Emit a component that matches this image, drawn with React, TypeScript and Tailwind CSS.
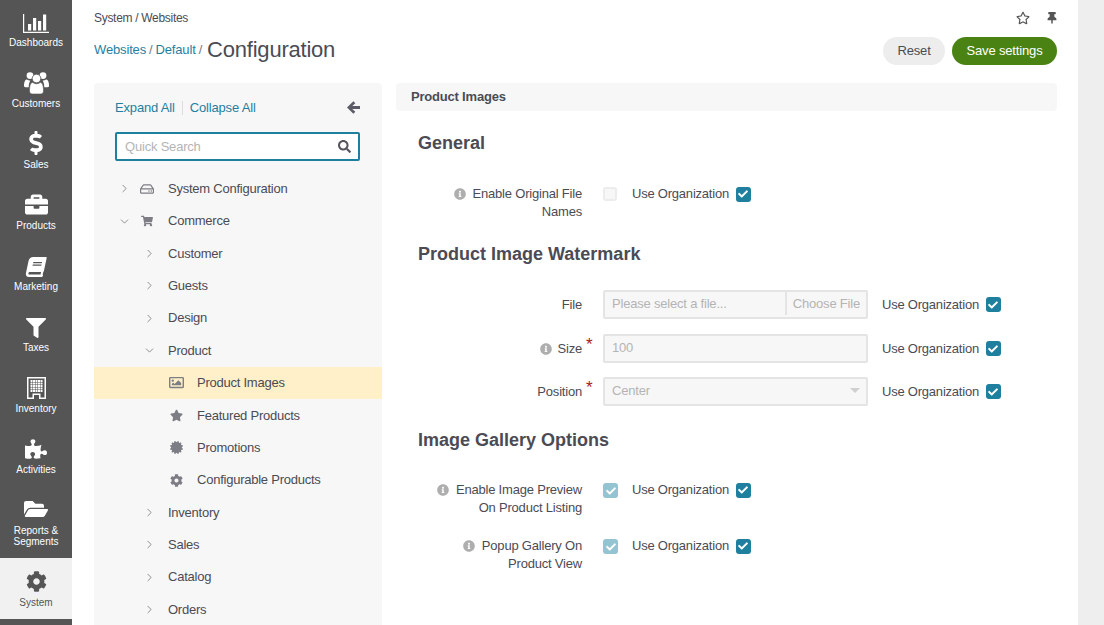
import React from "react";
import { FaDollarSign, FaBriefcase, FaBook, FaFilter, FaPuzzlePiece, FaFolderOpen, FaCog, FaSearch, FaShoppingCart, FaRegHdd, FaRegImage, FaStar, FaCertificate, FaInfoCircle, FaRegStar, FaThumbtack, FaCheck } from "react-icons/fa";
import { ChevronRight, ChevronDown } from "lucide-react";

const Bars = () => (
  <svg width="26" height="19" viewBox="0 0 26 19" fill="white">
    <path d="M0 0h1.2v17.8H26V19H0z" />
    <rect x="5" y="10" width="3.2" height="6.5" />
    <rect x="10" y="4" width="3.2" height="12.5" />
    <rect x="15" y="7" width="3.2" height="9.5" />
    <rect x="20" y="0.5" width="3.2" height="16" />
  </svg>
);

const Users = () => (
  <svg width="25" height="22" viewBox="0 0 25 22" fill="white">
    <circle cx="6" cy="3.6" r="3.4" />
    <circle cx="19" cy="3.6" r="3.4" />
    <path d="M0 14c0-4 1-6.5 3-6.5 1 .8 2 1.1 3.4 1.1-.8 1.2-1.6 3-1.7 6.6H1.5C.5 15.200 0 14.800 0 14z" />
    <path d="M25 14c0-4-1-6.5-3-6.500-1 .8-2 1.100-3.400 1.100.8 1.200 1.600 3 1.700 6.600h3.200c1 0 1.500-.4 1.500-1.200z" />
    <circle cx="12.500" cy="6.500" r="4.300" fill="white" stroke="#555555" strokeWidth="0.8" />
    <path d="M5.500 19c0-6 1.200-8.500 3.400-8.500 1 .9 2.200 1.300 3.600 1.300s2.600-.4 3.600-1.300c2.200 0 3.400 2.500 3.400 8.500 0 2-1.300 3-3 3H8.500c-1.700 0-3-1-3-3z" stroke="#555555" strokeWidth="0.6" />
  </svg>
);

const Building = () => (
  <svg width="19" height="22" viewBox="0 0 19 22" fill="white">
    <path fillRule="evenodd" d="M0 0h19v22H12v-4H7v4H0zM1.500 1.500v19H5.500v-4h8v4h4v-19z" />
    {[3, 5.500, 8, 10.500, 13].map((y) => [3.500, 6, 8.500, 11, 13.500].map((x) => <rect key={`${x}-${y}`} x={x} y={y} width="2" height="2" />))}
  </svg>
);

const BackArrow = () => (
  <svg width="13" height="13" viewBox="0 0 13 13" fill="#5c5c66">
    <path d="M6.400 0.300L8.300 2.200 5.300 5H13V8H5.300L8.300 10.800 6.400 12.700 0 6.500z" />
  </svg>
);

const nav: [React.ReactNode, string][] = [
  [<Bars />, "Dashboards"],
  [<Users />, "Customers"],
  [<FaDollarSign size={24} />, "Sales"],
  [<FaBriefcase size={23} />, "Products"],
  [<FaBook size={20} className="-skew-x-12" />, "Marketing"],
  [<FaFilter size={20} />, "Taxes"],
  [<Building />, "Inventory"],
  [<FaPuzzlePiece size={22} />, "Activities"],
];

function NavItem({ icon, label, tall }: { icon: React.ReactNode; label: string; tall?: boolean }) {
  return (
    <div className={`${tall ? "h-[70px]" : "h-[61px]"} flex flex-col items-center text-white shrink-0`}>
      <div className="h-[24px] mt-[9px] flex items-end justify-center">{icon}</div>
      <div className={`mt-[4px] text-[10px] text-center w-[64px] ${tall ? "leading-[11px]" : "leading-[12px]"}`}>{label}</div>
    </div>
  );
}

function Tree({ depth, open, icon, label, active }: { depth: number; open?: boolean; icon?: React.ReactNode; label: string; active?: boolean }) {
  return (
    <div className={`h-[32.38px] flex items-center ${active ? "bg-[#fff0c9]" : ""}`}>
      {depth < 2 ? (
        <span className={`w-[16px] flex justify-center text-[#777777] ${depth === 0 ? "ml-[22px]" : "ml-[47px]"}`}>
          {open ? <ChevronDown size={13} strokeWidth={1.5} /> : <ChevronRight size={13} strokeWidth={1.5} />}
        </span>
      ) : (
        <span className="w-[16px] ml-[74px] flex justify-center text-[#7d7d85]">{icon}</span>
      )}
      {depth === 0 && <span className="w-[16px] ml-[7px] flex justify-center text-[#7d7d85]">{icon}</span>}
      <span className={`text-[13px] tracking-[-0.24px] text-[#4b4b55] ${depth === 0 ? "ml-[13px]" : depth === 1 ? "ml-[11px]" : "ml-[13px]"}`}>{label}</span>
    </div>
  );
}

function Check({ dim }: { dim?: boolean }) {
  return (
    <span className={`w-[15px] h-[15px] rounded-[3px] flex items-center justify-center shrink-0 ${dim ? "bg-[#94c3d2]" : "bg-[#1f7f9f]"}`}>
      <FaCheck size={10} color="white" />
    </span>
  );
}

function UseOrg() {
  return (
    <div className="flex items-center gap-[7px] h-[18px] text-[13px] tracking-[-0.22px] text-[#4b4b55]">
      <span>Use Organization</span>
      <Check />
    </div>
  );
}

function Info() {
  return <FaInfoCircle size={12} className="text-[#aeaeae] shrink-0" />;
}

function Req() {
  return <span className="text-[#a61c1c] text-[17px] leading-none absolute left-full ml-[4px] top-[-3px]">*</span>;
}

function BoolRow({ lines, on, className }: { lines: string[]; on?: boolean; className?: string }) {
  return (
    <div className={`flex items-start ${className ?? ""}`}>
      <div className="w-[164px] text-right text-[13px] tracking-[-0.2px] leading-[18px] text-[#4b4b55]">
        <div className="flex justify-end items-center gap-[7px]"><Info /><span>{lines[0]}</span></div>
        <div>{lines[1]}</div>
      </div>
      <div className="ml-[21px] mt-[2px] w-[15px]">
        {on ? <Check dim /> : <span className="block w-[14px] h-[14px] rounded-[3px] border-2 border-[#ececec] bg-[#f7f7f7]" />}
      </div>
      <div className="ml-[14px]"><UseOrg /></div>
    </div>
  );
}

function InputRow({ label, info, req, children, className }: { label: string; info?: boolean; req?: boolean; children: React.ReactNode; className?: string }) {
  return (
    <div className={`flex items-center h-[29px] ${className ?? ""}`}>
      <div className="w-[164px] flex justify-end items-center gap-[6px] text-[13px] tracking-[-0.2px] text-[#4b4b55]">
        {info && <Info />}
        <span className="relative">{label}{req && <Req />}</span>
      </div>
      <div className="ml-[21px] w-[265px] h-[29px]">{children}</div>
      <div className="ml-[14px]"><UseOrg /></div>
    </div>
  );
}

const box = "h-full border-2 border-[#e4e4e4] bg-[#f7f7f7] rounded-[2px] flex items-center pb-[2px] text-[13px] tracking-[-0.2px] text-[#b4b4b4]";

export default function App() {
  return (
    <div className="flex h-[625px] w-[1104px] overflow-hidden bg-white font-['Liberation_Sans',sans-serif]">
      <aside className="w-[72px] h-full bg-[#555555] shrink-0 flex flex-col">
        {nav.map(([i, l]) => <NavItem key={l} icon={i} label={l} />)}
        <NavItem tall icon={<FaFolderOpen size={24} />} label="Reports & Segments" />
        <div className="h-[61px] bg-[#f1f1f1] flex flex-col items-center text-[#555] shrink-0">
          <div className="h-[24px] mt-[10px] flex items-end"><FaCog size={21} /></div>
          <div className="mt-[5px] text-[10px] leading-[12px]">System</div>
        </div>
      </aside>

      <main className="w-[1006px] shrink-0 pl-[22px] pr-[21px]">
        <div className="flex justify-between items-center h-[36px]">
          <div className="text-[12px] tracking-[-0.3px] text-[#4b4b55]">System / Websites</div>
          <div className="flex items-center gap-[16px] text-[#555] -mr-[1px]">
            <FaRegStar size={14} />
            <FaThumbtack size={12} />
          </div>
        </div>
        <div className="flex justify-between items-center h-[29px]">
          <div className="flex items-center text-[13px] tracking-[-0.15px] text-[#1f7f9f] pb-[2px]">
            <span>Websites</span><span className="mx-[3px] text-[#777]">/</span><span>Default</span><span className="mx-[3px] text-[#777]">/</span>
            <span className="text-[22px] tracking-[-0.22px] text-[#4b4b55] ml-[2px]">Configuration</span>
          </div>
          <div className="flex gap-[7px] text-[13px] tracking-[-0.15px]">
            <span className="h-[28px] w-[62px] rounded-full bg-[#ededed] text-[#4b4b55] flex items-center justify-center">Reset</span>
            <span className="h-[28px] w-[105px] rounded-full bg-[#4a8313] text-white flex items-center justify-center">Save settings</span>
          </div>
        </div>

        <div className="flex mt-[18px] gap-[14px]">
          <div className="w-[288px] h-[560px] bg-[#f7f7f7] rounded-t-[4px] shrink-0">
            <div className="flex items-center justify-between h-[49px] pl-[21px] pr-[22px]">
              <div className="flex items-center text-[13px] tracking-[-0.17px] text-[#1f7f9f]">
                <span>Expand All</span>
                <span className="w-px h-[14px] bg-[#ddd] mx-[7px]" />
                <span>Collapse All</span>
              </div>
              <BackArrow />
            </div>
            <div className="ml-[21px] mr-[22px] h-[29px] border-2 border-[#1f7f9f] bg-white rounded-[2px] flex items-center justify-between pl-[8px] pr-[7px] text-[13px] tracking-[-0.2px] text-[#b4b4b4]">
              <span>Quick Search</span>
              <FaSearch size={13} className="text-[#55555f]" />
            </div>
            <div className="mt-[11.5px]">
              <Tree depth={0} icon={<FaRegHdd size={14} />} label="System Configuration" />
              <Tree depth={0} open icon={<FaShoppingCart size={12} />} label="Commerce" />
              <Tree depth={1} label="Customer" />
              <Tree depth={1} label="Guests" />
              <Tree depth={1} label="Design" />
              <Tree depth={1} open label="Product" />
              <Tree depth={2} active icon={<FaRegImage size={15} />} label="Product Images" />
              <Tree depth={2} icon={<FaStar size={13} />} label="Featured Products" />
              <Tree depth={2} icon={<FaCertificate size={13} />} label="Promotions" />
              <Tree depth={2} icon={<FaCog size={13} />} label="Configurable Products" />
              <Tree depth={1} label="Inventory" />
              <Tree depth={1} label="Sales" />
              <Tree depth={1} label="Catalog" />
              <Tree depth={1} label="Orders" />
            </div>
          </div>

          <div className="flex-1">
            <div className="h-[28px] bg-[#f7f7f7] rounded-[4px] flex items-center px-[15px] text-[13px] tracking-[-0.2px] font-bold text-[#4b4b55]">Product Images</div>
            <div className="pl-[22px]">
              <h2 className="text-[18px] font-bold text-[#4b4b55] mt-[21px] leading-[22px]">General</h2>
              <BoolRow className="mt-[31px]" lines={["Enable Original File", "Names"]} />
              <h2 className="text-[18px] font-bold text-[#4b4b55] mt-[22px] leading-[22px]">Product Image Watermark</h2>
              <InputRow className="mt-[25px]" label="File">
                <div className={box + " pl-[7px] justify-between"}>
                  <span>Please select a file...</span>
                  <span className="h-full border-l-2 border-[#e4e4e4] px-[6px] flex items-center">Choose File</span>
                </div>
              </InputRow>
              <InputRow className="mt-[15px]" label="Size" info req>
                <div className={box + " pl-[7px]"}>100</div>
              </InputRow>
              <InputRow className="mt-[14px]" label="Position" req>
                <div className={box + " pl-[7px] justify-between pr-[6px]"}>
                  <span>Center</span>
                  <span className="w-0 h-0 border-x-[5px] border-x-transparent border-t-[5px] border-t-[#d0d0d0]" />
                </div>
              </InputRow>
              <h2 className="text-[18px] font-bold text-[#4b4b55] mt-[23px] leading-[22px]">Image Gallery Options</h2>
              <BoolRow className="mt-[30px]" on lines={["Enable Image Preview", "On Product Listing"]} />
              <BoolRow className="mt-[20px]" on lines={["Popup Gallery On", "Product View"]} />
            </div>
          </div>
        </div>
      </main>
      <div className="flex-1 bg-[#eeeeee]" />
    </div>
  );
}
